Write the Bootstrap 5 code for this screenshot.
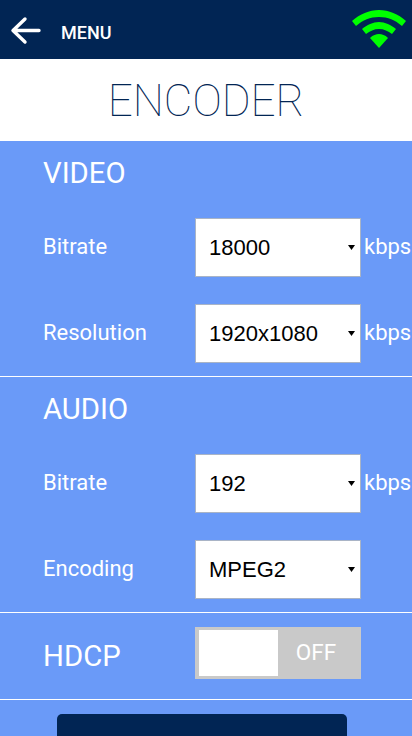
<!DOCTYPE html>
<html lang="en">
<head>
<meta charset="utf-8">
<title>Encoder</title>
<link href="https://cdn.jsdelivr.net/npm/bootstrap@5.3.0/dist/css/bootstrap.min.css" rel="stylesheet">
<style>
html,body{height:736px;overflow:hidden}
body{font-family:Roboto,sans-serif;background:#6a9af8;color:#fff}
.topbar{height:59px;background:#012554;padding:0 5px 0 10px}
.menu-txt{font-size:18px;font-weight:500;margin-left:19px;margin-top:6px}
.titlebox{height:82px;background:#fff;color:#012554;font-weight:100;font-size:44px;line-height:84px;text-align:center}
.section-h{font-size:29.300px;line-height:32px;padding-left:43px;margin:0;font-weight:400}
.block-h{padding-top:16px;height:77px}
.frow{height:59px;padding-left:43px;font-size:22px}
.frow + .frow{margin-top:27px}
.lbl{width:152px;padding-bottom:2px}
.sel{width:166px;height:59px;flex:none;border:1px solid #a9b4c6;border-radius:0;background:#fff url("data:image/svg+xml,%3Csvg xmlns='http://www.w3.org/2000/svg' width='7' height='5'%3E%3Cpath d='M0 0h7L3.500 5z'/%3E%3C/svg%3E") no-repeat right 5px center;color:#000;font-family:"Liberation Sans",sans-serif;font-size:22px;padding:0 0 0 13px;appearance:none}
.unit{margin-left:3px;font-size:22px;padding-bottom:2px}
.rule{height:1px;background:#fff;margin-top:13px}
.hdcp{height:86px;padding-left:43px}
.hdcp .section-h{padding-left:0;width:152px}
.sw{width:166px;height:52px;background:#c9c9c9;padding:3px 7px 3px 4px;font-size:22.500px;margin-bottom:6px}
.knob{width:79px;height:46px;background:#fff}
.sw-t{color:#fff}
.go{width:290px;height:60px;margin:14px 0 0 57px;background:#012554;border:0;border-radius:5px}
</style>
</head>
<body>
<header class="topbar d-flex align-items-center">
  <svg width="32" height="32" viewBox="0 0 32 32" fill="none" stroke="#fff" stroke-width="3.4" stroke-linecap="round" stroke-linejoin="round"><path d="M29 16.500H4M15 5L3 16.500L15 28"/></svg>
  <span class="menu-txt">MENU</span>
  <svg class="ms-auto" width="56" height="40" viewBox="0 0 56 40" fill="#0f0"><path d="M28 0C38 0 47 4 55 11L51 16C44 10 37 7 28 7C19 7 12 10 5 16L1 11C9 4 18 0 28 0Z"/><path d="M28 12C34 12 40 15 45 19L41 24C37 21 33 19 28 19C23 19 19 21 15 24L11 19C16 15 22 12 28 12Z"/><path d="M28 24C31 24 34 25 37 28L28 38L19 28C22 25 25 24 28 24Z"/></svg>
</header>
<div class="titlebox">ENCODER</div>
<main>
  <h2 class="section-h block-h">VIDEO</h2>
  <div class="frow d-flex align-items-center"><span class="lbl">Bitrate</span><select class="sel"><option>18000</option></select><span class="unit">kbps</span></div>
  <div class="frow d-flex align-items-center"><span class="lbl">Resolution</span><select class="sel"><option>1920x1080</option></select><span class="unit">kbps</span></div>
  <div class="rule"></div>
  <h2 class="section-h block-h">AUDIO</h2>
  <div class="frow d-flex align-items-center"><span class="lbl">Bitrate</span><select class="sel"><option>192</option></select><span class="unit">kbps</span></div>
  <div class="frow d-flex align-items-center"><span class="lbl">Encoding</span><select class="sel"><option>MPEG2</option></select></div>
  <div class="rule"></div>
  <div class="hdcp d-flex align-items-center">
    <h2 class="section-h">HDCP</h2>
    <div class="sw d-flex align-items-center"><span class="knob"></span><span class="sw-t flex-grow-1 text-center">OFF</span></div>
  </div>
  <div class="rule mt-0"></div>
  <button class="go d-block" type="button" aria-label="Apply"></button>
</main>
</body>
</html>
